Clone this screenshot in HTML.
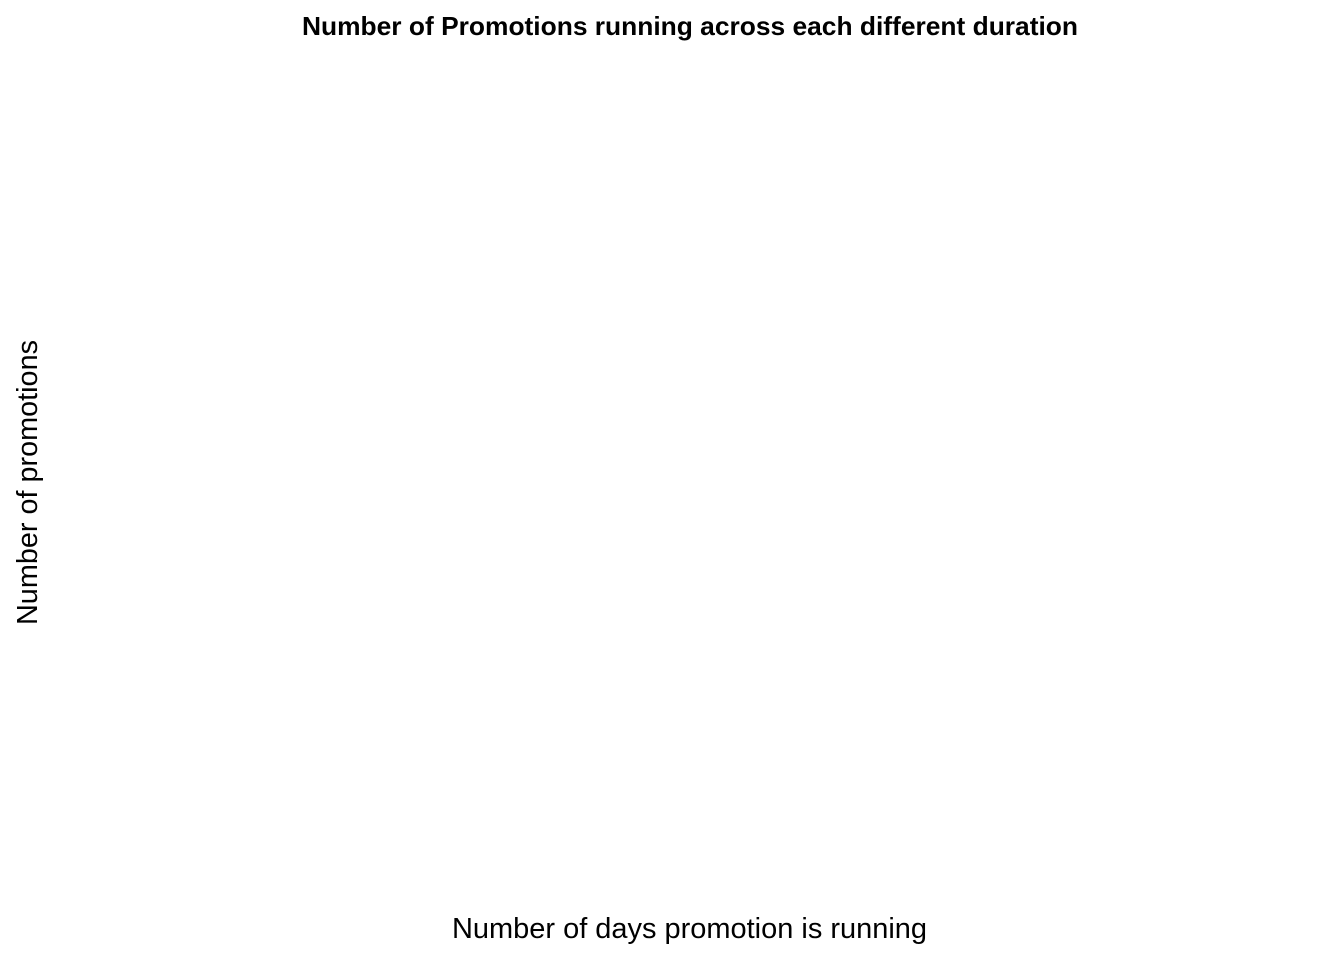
<!DOCTYPE html>
<html>
<head>
<meta charset="utf-8">
<style>
html,body{margin:0;padding:0;background:#fff;}
svg{display:block;}
text{font-family:"Liberation Sans",Arial,sans-serif;fill:#000;}
</style>
</head>
<body>
<svg width="1344" height="960" viewBox="0 0 1344 960" xmlns="http://www.w3.org/2000/svg">
<rect width="1344" height="960" fill="#fff"/>
<text x="302" y="35" font-size="26" font-weight="bold" textLength="776" lengthAdjust="spacingAndGlyphs">Number of Promotions running across each different duration</text>
<text x="452" y="938" font-size="29" textLength="475" lengthAdjust="spacingAndGlyphs">Number of days promotion is running</text>
<text transform="translate(37,625) rotate(-90)" font-size="29" textLength="285" lengthAdjust="spacingAndGlyphs">Number of promotions</text>
</svg>
</body>
</html>
